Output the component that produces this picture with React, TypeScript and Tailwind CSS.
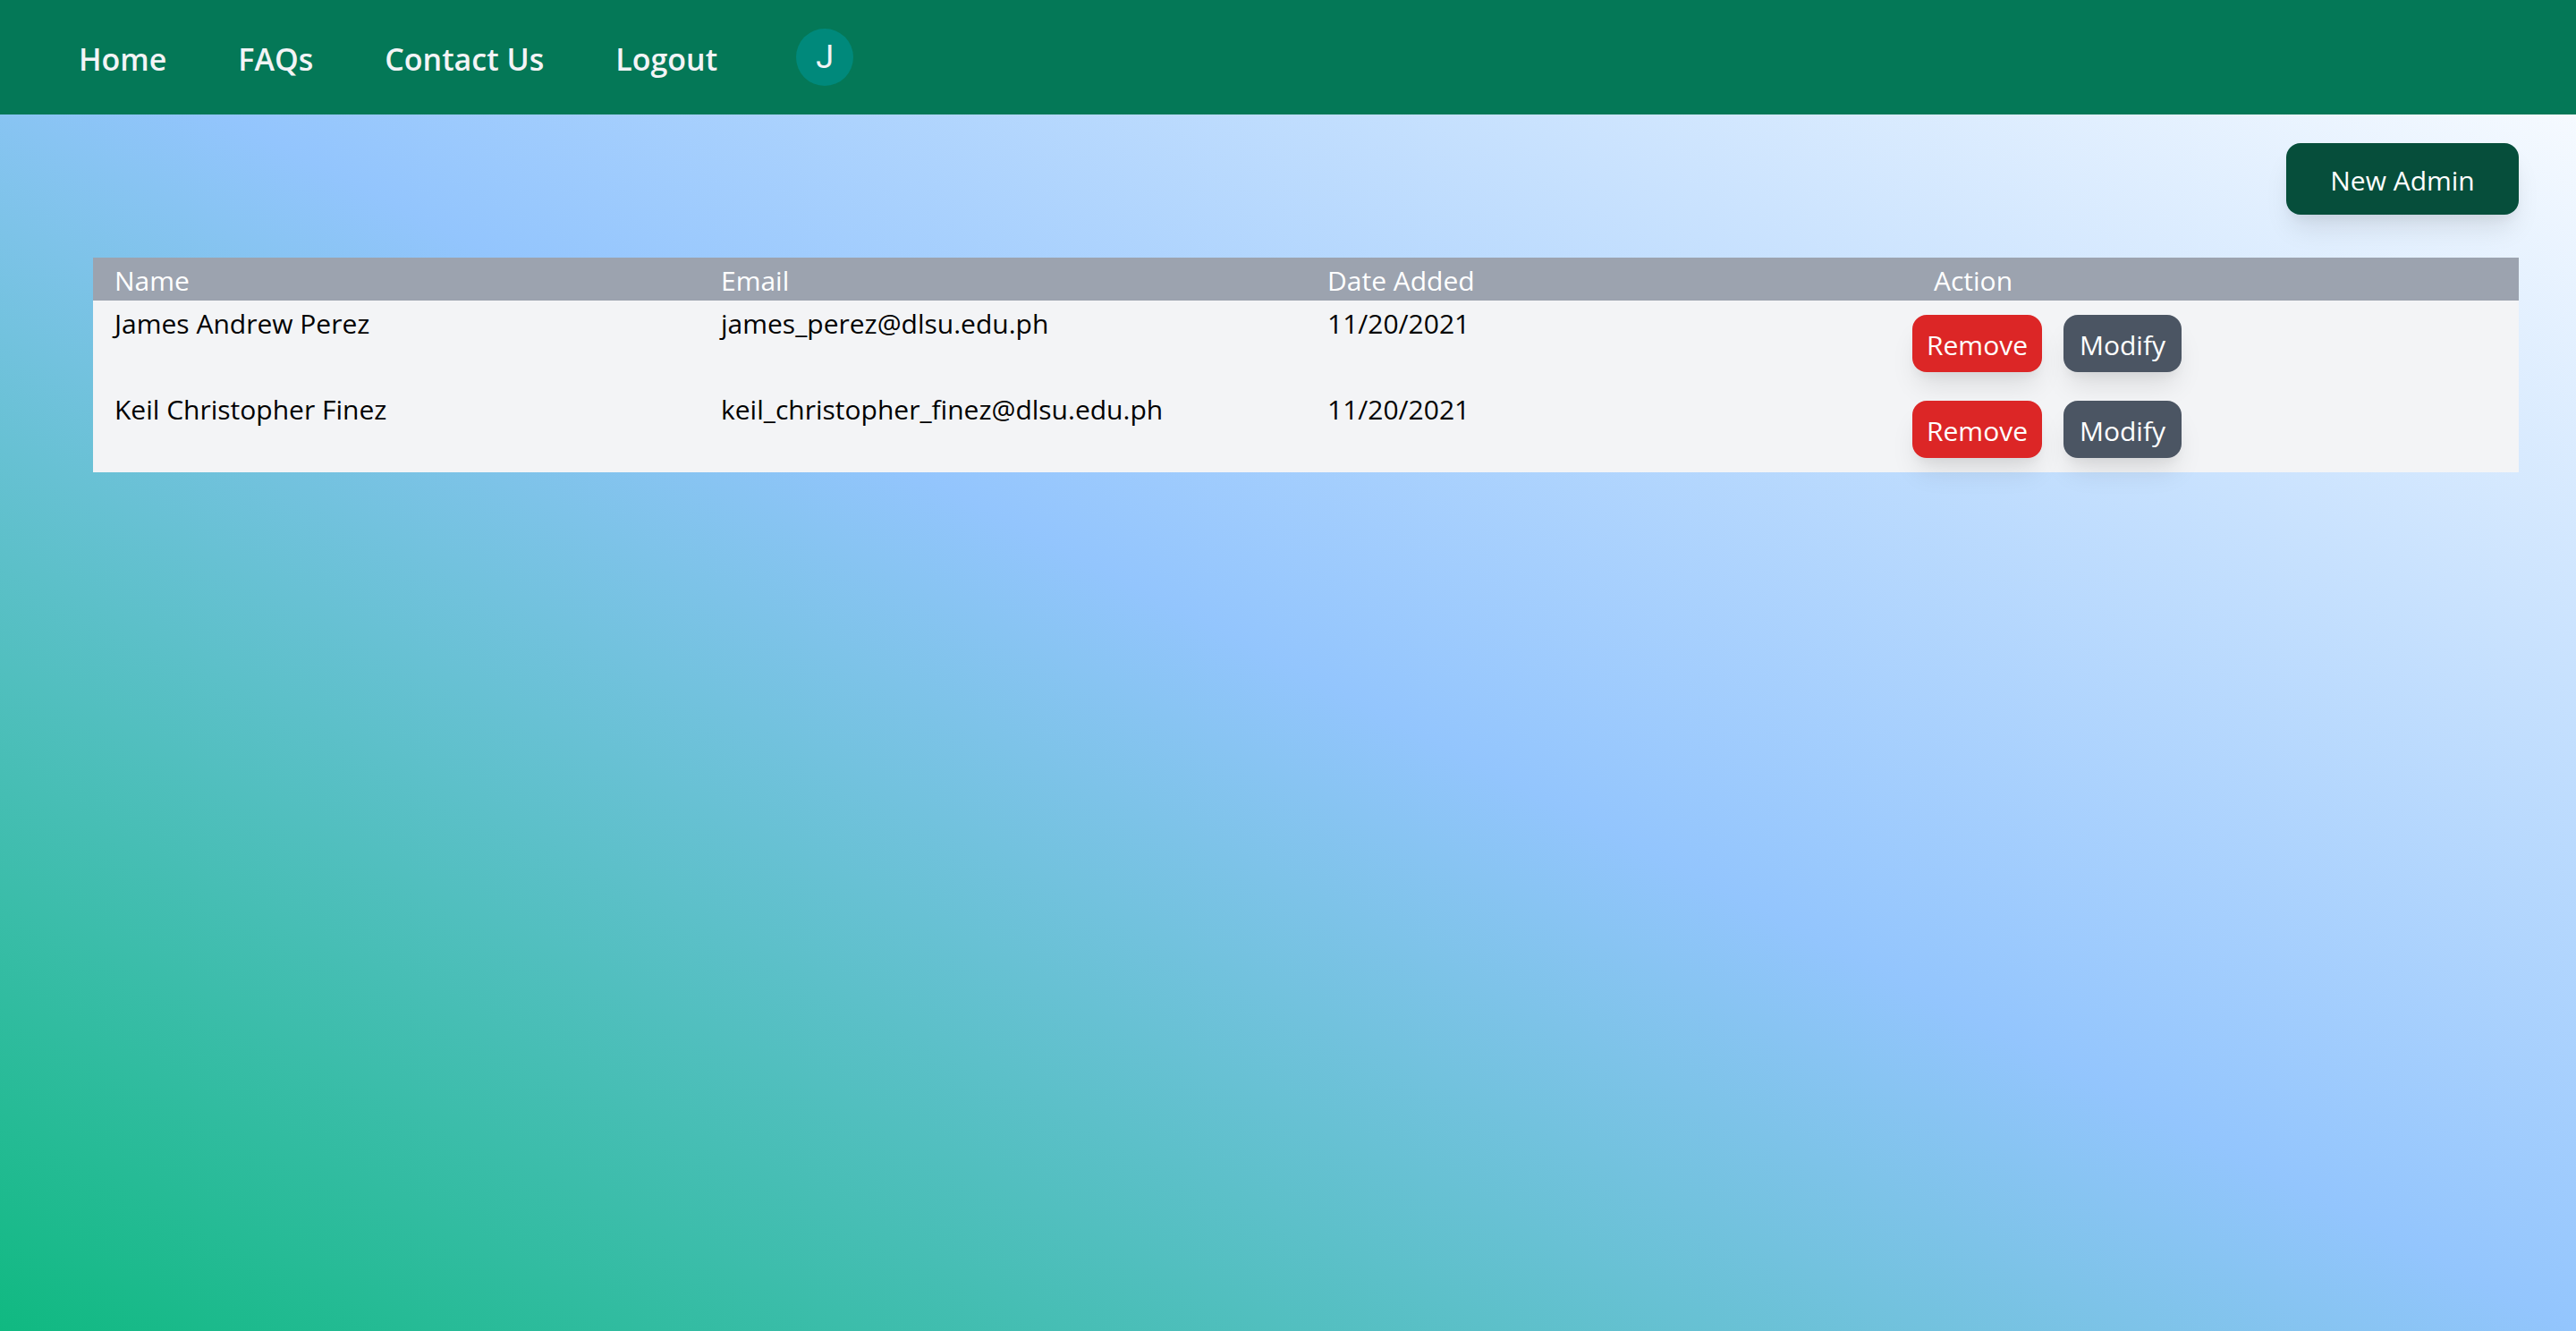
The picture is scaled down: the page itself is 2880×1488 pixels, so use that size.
const links = ["Home", "FAQs", "Contact Us", "Logout"];

const columns = ["Name", "Email", "Date Added", "Action"];

const admins = [
  { name: "James Andrew Perez", email: "james_perez@dlsu.edu.ph", added: "11/20/2021" },
  { name: "Keil Christopher Finez", email: "keil_christopher_finez@dlsu.edu.ph", added: "11/20/2021" },
];

const buttonBase =
  "rounded-2xl text-white shadow-[0_20px_30px_-6px_rgba(0,0,0,0.1),0_8px_12px_-4px_rgba(0,0,0,0.05)]";

function NavBar() {
  return (
    <nav className="flex h-32 items-center gap-20 bg-[#047857] pl-22 text-[34px] leading-14 font-semibold text-gray-100">
      {links.map((label) => (
        <a key={label} href="#" className="pt-1">
          {label}
        </a>
      ))}
      <span className="ml-2 flex size-16 items-center justify-center rounded-full bg-[#00897b] font-[Roboto,sans-serif] text-[36px] font-normal">
        J
      </span>
    </nav>
  );
}

function AdminTable() {
  return (
    <table className="w-full table-fixed text-left">
      <thead className="bg-[#9ca3af] text-white">
        <tr>
          {columns.map((column) => (
            <th key={column} className="px-6 pt-1 font-normal">
              {column}
            </th>
          ))}
        </tr>
      </thead>
      <tbody className="bg-[#f3f4f6] text-black">
        {admins.map((admin) => (
          <tr key={admin.email} className="align-top">
            <td className="px-6 pt-1">{admin.name}</td>
            <td className="px-6 pt-1">{admin.email}</td>
            <td className="px-6 pt-1">{admin.added}</td>
            <td>
              <div className="flex gap-6 py-4">
                <button type="button" className={`${buttonBase} bg-[#dc2626] px-4 pt-3 pb-2`}>
                  Remove
                </button>
                <button type="button" className={`${buttonBase} min-w-33 bg-[#4b5563] px-4 pt-3 pb-2`}>
                  Modify
                </button>
              </div>
            </td>
          </tr>
        ))}
      </tbody>
    </table>
  );
}

export default function App() {
  return (
    <div className="min-h-screen bg-[linear-gradient(to_top_right,#10b981,#93c5fd,#ffffff)] font-['Open_Sans','Noto_Sans',sans-serif] text-[30px] leading-11">
      <NavBar />
      <main className="flex flex-col gap-12 pt-8 pr-16 pl-26">
        <button type="button" className={`${buttonBase} min-w-65 self-end bg-[#064e3b] px-12 pt-5 pb-4`}>
          New Admin
        </button>
        <AdminTable />
      </main>
    </div>
  );
}
